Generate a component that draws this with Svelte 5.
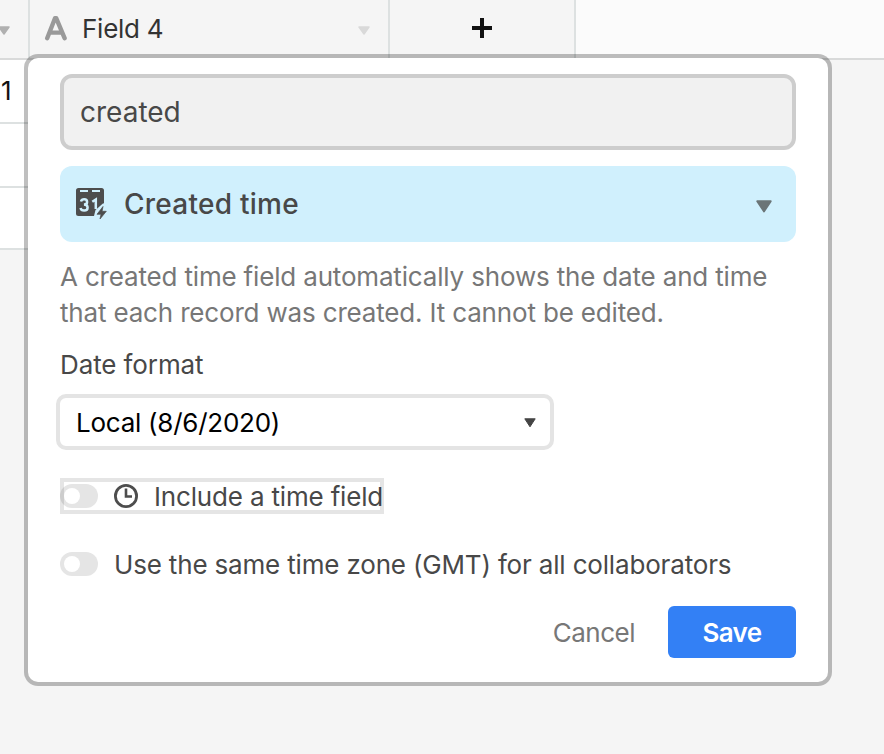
<script>
    let name = "created";
    let includeTime = false;
    let sameZone = false;
    let rows = [1, 2, 3];
</script>

<div class="grid">
    <div class="header">
        <div class="col first">
            <svg class="caret" width="12" height="9" viewBox="0 0 12 9"><path d="M1 1h10L6 8z" fill="#b0b0b0" stroke="#b0b0b0" stroke-width="1.5" stroke-linejoin="round"/></svg>
        </div>
        <div class="col field">
            <svg class="letter" width="24" height="26" viewBox="0 0 24 26"><path d="M3.2 23.2L11 3.2h1.2L20.6 23.2M6 17.6h12" fill="none" stroke="#999" stroke-width="4.4" stroke-linecap="round" stroke-linejoin="round"/></svg>
            <span class="field-name">Field 4</span>
            <svg class="caret" width="12" height="9" viewBox="0 0 12 9"><path d="M1 1h10L6 8z" fill="#d9d9d9" stroke="#d9d9d9" stroke-width="1.5" stroke-linejoin="round"/></svg>
        </div>
        <div class="col add">
            <svg width="20" height="20" viewBox="0 0 20 20"><path d="M10 1.5v17M1.5 10h17" stroke="#111" stroke-width="4" stroke-linecap="square"/></svg>
        </div>
        <div class="rest"></div>
    </div>
    {#each rows as row}
        <div class="row" class:last={row === rows.length}>{row === 1 ? "1" : ""}</div>
    {/each}

    <div class="popup">
        <input class="name" bind:value={name} />

        <button class="type">
            <svg width="32" height="32" viewBox="0 0 32 32">
                <path d="M2.5 0h23A2.5 2.5 0 0 1 28 2.5V15l-7 7-2 6H2.5A2.5 2.5 0 0 1 0 25.500V2.500A2.500 2.500 0 0 1 2.500 0z" fill="#4d4d4d"/>
                <path d="M4 3h8M16 3h8" stroke="#d0f0fd" stroke-width="2"/>
                <path d="M5 13.500q.6-2.300 3.200-2.300 2.900 0 2.900 2.700 0 2.600-3.200 2.600 3.700 0 3.700 3 0 3.100-3.500 3.100-3 0-3.600-2.600M16.300 13.800l3.500-2.300V21" fill="none" stroke="#d0f0fd" stroke-width="2.500"/>
                <path d="M27.500 15l-8 7-1.500 6h5z" fill="#d0f0fd"/>
                <path d="M27 18.500L21 26.300h4L24 31l6.300-7.700h-4.200z" fill="#4d4d4d" stroke="#4d4d4d" stroke-width=".7"/>
            </svg>
            <span class="type-name">Created time</span>
            <svg class="caret" width="16" height="13" viewBox="0 0 16 13"><path d="M1.2 1.2h13.6L8 11.5z" fill="#6b7577" stroke="#6b7577" stroke-width="1.8" stroke-linejoin="round"/></svg>
        </button>

        <p class="help">
            A created time field automatically shows the date and time<br />
            that each record was created. It cannot be edited.
        </p>

        <div class="label">Date format</div>
        <button class="select">
            <span>Local (8/6/2020)</span>
            <svg class="caret" width="12" height="10" viewBox="0 0 12 10"><path d="M.8.8h10.4L6 8.8z" fill="#444" stroke="#444" stroke-linejoin="round"/></svg>
        </button>

        <div class="option time" on:click={() => (includeTime = !includeTime)} role="presentation">
            <span class="toggle" class:on={includeTime}></span>
            <svg width="24" height="24" viewBox="0 0 24 24"><circle cx="12" cy="12" r="10.6" fill="none" stroke="#4d4d4d" stroke-width="2.8"/><path d="M12 4.5v8h6" fill="none" stroke="#4d4d4d" stroke-width="2.6"/></svg>
            <span class="include">Include a time field</span>
        </div>

        <div class="option zone" on:click={() => (sameZone = !sameZone)} role="presentation">
            <span class="toggle" class:on={sameZone}></span>
            <span>Use the same time zone (GMT) for all collaborators</span>
        </div>

        <div class="actions">
            <button class="cancel">Cancel</button>
            <button class="save">Save</button>
        </div>
    </div>
</div>

<style>
    :global(body) {
        background: #f5f5f5;
        overflow: hidden;
    }
    .grid {
        position: relative;
        height: 754px;
        overflow: hidden;
        font-family: Inter, "Liberation Sans", sans-serif;
        font-size: 26px;
        letter-spacing: -0.17px;
        color: #484848;
    }
    .grid * {
        box-sizing: border-box;
    }
    svg {
        display: block;
        flex: none;
    }
    button, input {
        font: inherit;
        letter-spacing: inherit;
        color: inherit;
        border: 0;
        margin: 0;
        text-align: left;
        white-space: nowrap;
    }
    span, .label, .help {
        white-space: nowrap;
    }
    .caret {
        margin-left: auto;
    }
    .header {
        display: flex;
        height: 60px;
        border-bottom: 2px solid #d9dada;
    }
    .col {
        display: flex;
        align-items: center;
        border-right: 2px solid #dde1e1;
    }
    .first {
        width: 30px;
        padding-right: 18px;
        padding-top: 3px;
    }
    .first .caret {
        margin-left: -2px;
    }
    .field {
        width: 360px;
        padding: 0 18px 0 14px;
        color: #333;
    }
    .letter {
        margin: -3px 14px 0 0;
    }
    .field-name {
        margin-top: -2px;
        letter-spacing: -0.25px;
    }
    .field .caret {
        margin-top: 3px;
    }
    .add {
        width: 186px;
        justify-content: center;
        padding-bottom: 2px;
    }
    .rest {
        flex: 1;
        background: #fbfbfb;
    }
    .row {
        width: 30px;
        height: 64px;
        padding-left: 1px;
        background: #fff;
        border-bottom: 2px solid #dde1e1;
        line-height: 62px;
        color: #111;
    }
    .row.last {
        height: 62px;
    }
    .popup {
        position: absolute;
        left: 28px;
        top: 58px;
        width: 800px;
        height: 624px;
        padding: 16px 32px 0;
        background: #fff;
        border-radius: 10px;
        box-shadow: 0 0 0 4px rgba(0, 0, 0, 0.25);
    }
    .name {
        display: block;
        width: 736px;
        height: 76px;
        padding: 0 16px;
        border: 4px solid #cdcdcd;
        border-radius: 12px;
        background: #f1f1f1;
        outline: 0;
        font-size: 28px;
        letter-spacing: 0;
    }
    .type {
        display: flex;
        align-items: center;
        width: 736px;
        height: 76px;
        margin-top: 16px;
        padding: 0 24px 0 16px;
        border-radius: 12px;
        background: #d0f0fd;
        font-weight: 500;
        font-size: 28px;
        letter-spacing: 0.25px;
    }
    .type-name {
        margin-left: 16px;
    }
    .type .caret {
        margin-top: 4px;
    }
    .help {
        margin: 17px 0 0;
        line-height: 36px;
        color: #777;
    }
    .label {
        margin-top: 18px;
        line-height: 32px;
        letter-spacing: -0.1px;
    }
    .select {
        display: flex;
        align-items: center;
        width: 498px;
        height: 56px;
        margin: 13px 0 0 -4px;
        padding: 0 14px 0 16px;
        border: 4px solid #e4e4e4;
        border-radius: 10px;
        background: #fff;
        color: #000;
        letter-spacing: -0.25px;
    }
    .select .caret {
        margin-top: 2px;
    }
    .option {
        display: flex;
        align-items: center;
        height: 36px;
    }
    .time {
        width: 324px;
        margin-top: 28px;
        outline: 4px solid rgba(0, 0, 0, 0.1);
        outline-offset: -4px;
    }
    .zone {
        margin-top: 32px;
    }
    .toggle {
        width: 38px;
        height: 24px;
        margin-right: 16px;
        padding: 4px;
        border-radius: 12px;
        background: #e5e5e5;
        flex: none;
    }
    .toggle::before {
        content: "";
        display: block;
        width: 16px;
        height: 16px;
        border-radius: 50%;
        background: #fff;
    }
    .toggle.on {
        background: #20c933;
    }
    .toggle.on::before {
        margin-left: auto;
    }
    .include {
        margin-left: 16px;
    }
    .actions {
        display: flex;
        justify-content: flex-end;
        margin-top: 24px;
    }
    .cancel {
        margin-right: 33px;
        padding: 0;
        background: none;
        color: #777;
        letter-spacing: -0.5px;
    }
    .save {
        width: 128px;
        height: 52px;
        padding: 0;
        border-radius: 6px;
        background: #3380f5;
        color: #fff;
        font-weight: 600;
        letter-spacing: -0.7px;
        text-align: center;
    }
</style>
